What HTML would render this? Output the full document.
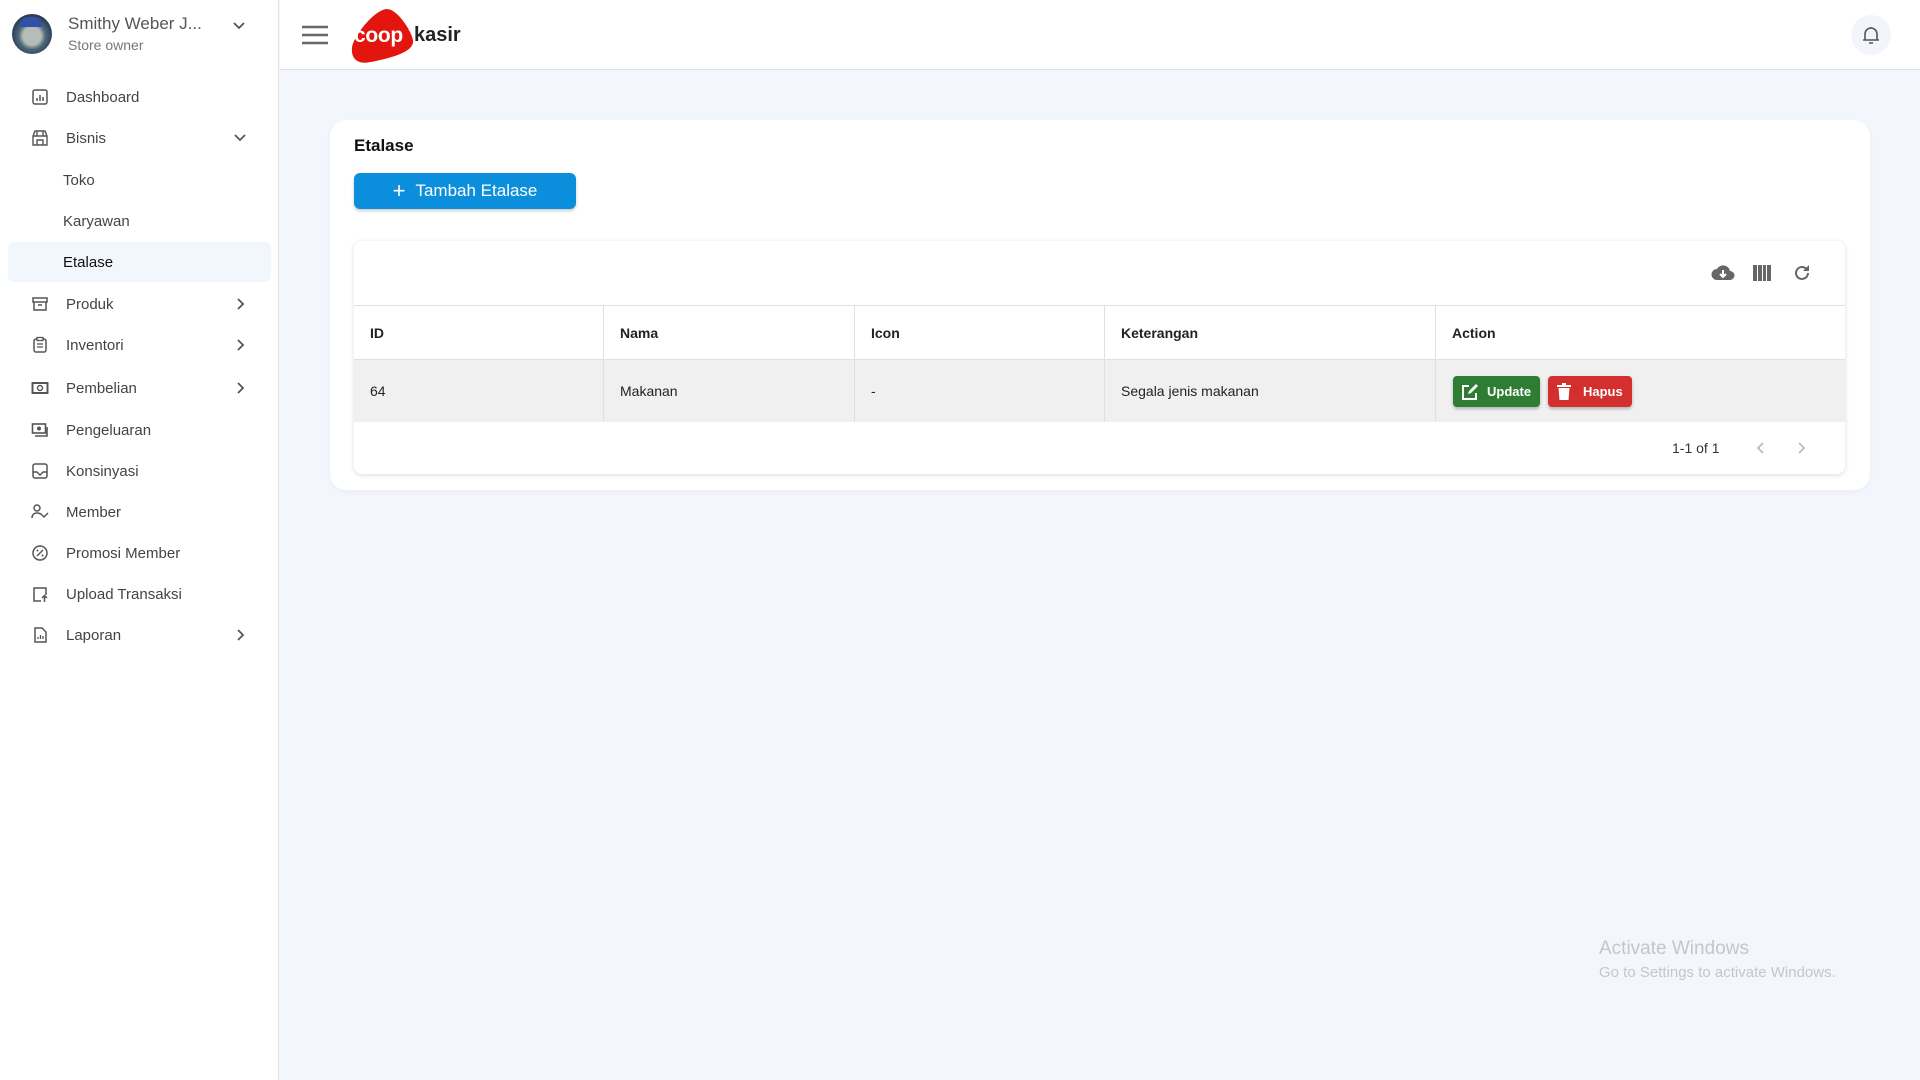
<!DOCTYPE html>
<html><head><meta charset="utf-8"><style>
*{box-sizing:border-box;margin:0;padding:0}
body{width:1920px;height:1080px;background:#f3f6fd;font-family:"Liberation Sans",sans-serif;position:relative;overflow:hidden;color:#222}
.abs{position:absolute}
#side{left:0;top:0;width:279px;height:1080px;background:#fff;border-right:1px solid #e2e2e2}
#top{left:280px;top:0;width:1640px;height:70px;background:#fff;border-bottom:1px solid #dedede}
.mi{position:absolute;left:0;width:279px;height:40px;font-size:15px;color:#444;display:flex;align-items:center}
.mi svg.ic{position:absolute;left:31px;width:18px;height:18px}
.mi span{position:absolute;left:66px}
.mi.sub span{left:63px}
.mi svg.chev{position:absolute;left:234px;width:12px;height:12px}
.card{left:330px;top:120px;width:1540px;height:370px;background:#fff;border-radius:16px;box-shadow:0 2px 6px rgba(0,0,0,.04)}
.inner{left:354px;top:241px;width:1491px;height:233px;background:#fff;border-radius:8px;box-shadow:0 1px 5px rgba(0,0,0,.15);overflow:hidden}
.cell{position:absolute;font-size:14px;display:flex;align-items:center;padding-left:16px;border-right:1px solid #e0e0e0}
.btn{position:absolute;color:#fff;font-size:13px;font-weight:bold;border-radius:4px;display:flex;align-items:center;box-shadow:0 2px 3px rgba(0,0,0,.25)}
</style></head><body>
<div id="side" class="abs">
  <div class="abs" style="left:12px;top:14px;width:40px;height:40px;border-radius:50%;background:radial-gradient(circle at 50% 55%,#b8bcb8 0 30%,#4e6a7a 45%,#2a3b55 70%,#1c2530 100%)"></div>
  <div class="abs" style="left:20px;top:17px;width:22px;height:10px;border-radius:10px 10px 2px 2px;background:#3150a8"></div>
  <div class="abs" style="left:68px;top:14px;font-size:17px;color:#555">Smithy Weber J...</div>
  <div class="abs" style="left:68px;top:37px;font-size:14px;color:#777">Store owner</div>
  <svg class="abs" style="left:232px;top:19px" width="14" height="14" viewBox="0 0 14 14"><path d="M2 4l5 5 5-5" stroke="#555" stroke-width="1.8" fill="none"/></svg>

  <div class="mi" style="top:77px"><svg class="ic" viewBox="0 0 18 18"><rect x="2" y="2" width="14" height="14" rx="2" stroke="#555" stroke-width="1.5" fill="none"/><path d="M6 13V10M9 13V7M12 13V9" stroke="#555" stroke-width="1.5"/></svg><span>Dashboard</span></div>
  <div class="mi" style="top:118px"><svg class="ic" viewBox="0 0 18 18"><path d="M2 7l2-5h10l2 5v9H2z M2 7h14 M6 2v5M12 2v5M6 16v-5h6v5" stroke="#555" stroke-width="1.4" fill="none"/></svg><span>Bisnis</span><svg class="chev" viewBox="0 0 12 12"><path d="M1 3l5 5 5-5" stroke="#555" stroke-width="1.8" fill="none"/></svg></div>
  <div class="mi sub" style="top:160px"><span>Toko</span></div>
  <div class="mi sub" style="top:201px"><span>Karyawan</span></div>
  <div class="abs" style="left:8px;top:242px;width:263px;height:40px;background:#f2f6fd;border-radius:6px"></div>
  <div class="mi sub" style="top:242px;color:#111"><span>Etalase</span></div>
  <div class="mi" style="top:284px"><svg class="ic" viewBox="0 0 18 18"><rect x="2" y="3" width="14" height="4" stroke="#555" stroke-width="1.5" fill="none"/><path d="M3 7v8h12V7M7 10h4" stroke="#555" stroke-width="1.5" fill="none"/></svg><span>Produk</span><svg class="chev" viewBox="0 0 12 12"><path d="M4 1l5 5-5 5" stroke="#555" stroke-width="1.8" fill="none"/></svg></div>
  <div class="mi" style="top:325px"><svg class="ic" viewBox="0 0 18 18"><rect x="3" y="3" width="12" height="13" rx="2" stroke="#555" stroke-width="1.5" fill="none"/><rect x="6" y="1.5" width="6" height="3" stroke="#555" stroke-width="1.3" fill="#fff"/><path d="M6 8h6M6 11h6" stroke="#555" stroke-width="1.3"/></svg><span>Inventori</span><svg class="chev" viewBox="0 0 12 12"><path d="M4 1l5 5-5 5" stroke="#555" stroke-width="1.8" fill="none"/></svg></div>
  <div class="mi" style="top:368px"><svg class="ic" viewBox="0 0 18 18"><rect x="1.5" y="4" width="15" height="10" stroke="#555" stroke-width="2" fill="none"/><circle cx="9" cy="9" r="2.5" stroke="#555" stroke-width="1.5" fill="none"/></svg><span>Pembelian</span><svg class="chev" viewBox="0 0 12 12"><path d="M4 1l5 5-5 5" stroke="#555" stroke-width="1.8" fill="none"/></svg></div>
  <div class="mi" style="top:410px"><svg class="ic" viewBox="0 0 18 18"><rect x="1.5" y="3" width="13" height="9" stroke="#555" stroke-width="1.6" fill="none"/><circle cx="8" cy="7.5" r="2" fill="#555"/><path d="M4 15h12V6" stroke="#555" stroke-width="1.6" fill="none"/></svg><span>Pengeluaran</span></div>
  <div class="mi" style="top:451px"><svg class="ic" viewBox="0 0 18 18"><rect x="2" y="2" width="14" height="14" rx="2" stroke="#555" stroke-width="1.5" fill="none"/><path d="M2 10h4l3 3 3-3h4" stroke="#555" stroke-width="1.5" fill="none"/></svg><span>Konsinyasi</span></div>
  <div class="mi" style="top:492px"><svg class="ic" viewBox="0 0 18 18"><circle cx="6" cy="5" r="3" stroke="#555" stroke-width="1.5" fill="none"/><path d="M1 15c0-4 3-5 5-5s4 1 5 2M11 12l2 2 4-4" stroke="#555" stroke-width="1.5" fill="none"/></svg><span>Member</span></div>
  <div class="mi" style="top:533px"><svg class="ic" viewBox="0 0 18 18"><circle cx="9" cy="9" r="7" stroke="#555" stroke-width="1.5" fill="none"/><path d="M6 12l6-6" stroke="#555" stroke-width="1.4"/><circle cx="6.5" cy="6.5" r="1" fill="#555"/><circle cx="11.5" cy="11.5" r="1" fill="#555"/></svg><span>Promosi Member</span></div>
  <div class="mi" style="top:574px"><svg class="ic" viewBox="0 0 18 18"><path d="M10 16H3V3h12v7" stroke="#555" stroke-width="1.5" fill="none"/><path d="M13.5 17v-6M11 13l2.5-2.5L16 13" stroke="#555" stroke-width="1.5" fill="none"/></svg><span>Upload Transaksi</span></div>
  <div class="mi" style="top:615px"><svg class="ic" viewBox="0 0 18 18"><path d="M4 2h7l4 4v10H4z" stroke="#555" stroke-width="1.5" fill="none"/><path d="M7 13v-2M9.5 13V9M12 13v-3" stroke="#555" stroke-width="1.3"/></svg><span>Laporan</span><svg class="chev" viewBox="0 0 12 12"><path d="M4 1l5 5-5 5" stroke="#555" stroke-width="1.8" fill="none"/></svg></div>
</div>

<div id="top" class="abs">
  <svg class="abs" style="left:21px;top:25px" width="28" height="20" viewBox="0 0 28 20"><path d="M1 2h26M1 10h26M1 18h26" stroke="#666" stroke-width="2.4"/></svg>
  <svg class="abs" style="left:71px;top:8px" width="66" height="56" viewBox="0 0 66 56"><path d="M36 1C46 1 60 22 62 32 64 44 40 50 20 54 6 57 0 50 1 40 2 28 24 1 36 1z" fill="#e3160f"/></svg>
  <div class="abs" style="left:74px;top:24px;color:#fff;font-size:21px;font-weight:bold;letter-spacing:-.3px">coop</div>
  <div class="abs" style="left:134px;top:24px;color:#222;font-size:20px;font-weight:bold">kasir</div>
  <div class="abs" style="left:1571px;top:15px;width:40px;height:40px;border-radius:50%;background:#f2f5fb"></div>
  <svg class="abs" style="left:1581px;top:25px" width="20" height="20" viewBox="0 0 20 20"><path d="M4 15V9a6 6 0 0112 0v6zM2 15h16M8 18h4M10 2v1" stroke="#555" stroke-width="1.6" fill="none"/></svg>
</div>

<div class="card abs"></div>
<div class="abs" style="left:354px;top:136px;font-size:17px;font-weight:bold;color:#111">Etalase</div>
<div class="abs" style="left:354px;top:173px;width:222px;height:36px;background:#0b8fdc;border-radius:6px;box-shadow:0 2px 3px rgba(0,0,0,.2);color:#fff;font-size:17px;display:flex;align-items:center;justify-content:center"><span style="font-size:22px;margin-right:10px;font-weight:300">+</span>Tambah Etalase</div>

<div class="inner abs">
  <svg class="abs" style="left:1357px;top:23px" width="24" height="18" viewBox="0 0 24 18"><path d="M19 7a7 7 0 00-13-2 5.5 5.5 0 000 11h13a4.5 4.5 0 000-9z" fill="#666"/><path d="M12 6v6M9 10l3 3 3-3" stroke="#fff" stroke-width="2" fill="none"/></svg>
  <svg class="abs" style="left:1399px;top:24px" width="18" height="16" viewBox="0 0 18 16"><path d="M0 0h4v16H0zM5 0h4v16H5zM10 0h3v16h-3zM14 0h4v16h-4z" fill="#666"/></svg>
  <svg class="abs" style="left:1439px;top:23px" width="18" height="18" viewBox="0 0 18 18"><path d="M15 9a6 6 0 11-2-4.5" stroke="#666" stroke-width="2" fill="none"/><path d="M16 1v6h-6z" fill="#666"/></svg>
  <div class="abs" style="left:0;top:64px;width:1491px;height:1px;background:#e0e0e0"></div>
  <div class="abs" style="left:0;top:118px;width:1491px;height:63px;background:#f0f0f0"></div>
  <div class="abs" style="left:0;top:118px;width:1491px;height:1px;background:#e0e0e0"></div>
  <div class="cell" style="left:0;top:65px;width:250px;height:53px;font-weight:bold">ID</div>
  <div class="cell" style="left:250px;top:65px;width:251px;height:53px;font-weight:bold">Nama</div>
  <div class="cell" style="left:501px;top:65px;width:250px;height:53px;font-weight:bold">Icon</div>
  <div class="cell" style="left:751px;top:65px;width:331px;height:53px;font-weight:bold">Keterangan</div>
  <div class="cell" style="left:1082px;top:65px;width:409px;height:53px;font-weight:bold;border-right:none">Action</div>
  <div class="cell" style="left:0;top:119px;width:250px;height:62px">64</div>
  <div class="cell" style="left:250px;top:119px;width:251px;height:62px">Makanan</div>
  <div class="cell" style="left:501px;top:119px;width:250px;height:62px">-</div>
  <div class="cell" style="left:751px;top:119px;width:331px;height:62px">Segala jenis makanan</div>
  <div class="btn" style="left:1099px;top:135px;width:87px;height:31px;background:#2e7d32"><svg style="margin:0 8px 0 8px" width="18" height="18" viewBox="0 0 18 18"><path d="M8 3H2v13h13v-6" stroke="#fff" stroke-width="2" fill="none"/><path d="M7 11l1-3 7-7 2 2-7 7z" fill="#fff"/></svg>Update</div>
  <div class="btn" style="left:1194px;top:135px;width:84px;height:31px;background:#d32f2f"><svg style="margin:0 12px 0 9px" width="14" height="17" viewBox="0 0 14 17"><path d="M0 2h14v2H0zM5 0h4v2H5zM1.5 5h11l-1 12h-9z" fill="#fff"/></svg>Hapus</div>
  <div class="abs" style="left:1318px;top:199px;font-size:14px;color:#333">1-1 of 1</div>
  <svg class="abs" style="left:1401px;top:200px" width="12" height="14" viewBox="0 0 12 14"><path d="M8 2L3 7l5 5" stroke="#bbb" stroke-width="1.8" fill="none"/></svg>
  <svg class="abs" style="left:1441px;top:200px" width="12" height="14" viewBox="0 0 12 14"><path d="M4 2l5 5-5 5" stroke="#bbb" stroke-width="1.8" fill="none"/></svg>
</div>

<div class="abs" style="left:1599px;top:938px;font-size:19px;color:#c4c6ca">Activate Windows</div>
<div class="abs" style="left:1599px;top:964px;font-size:15px;color:#c4c6ca">Go to Settings to activate Windows.</div>
</body></html>
